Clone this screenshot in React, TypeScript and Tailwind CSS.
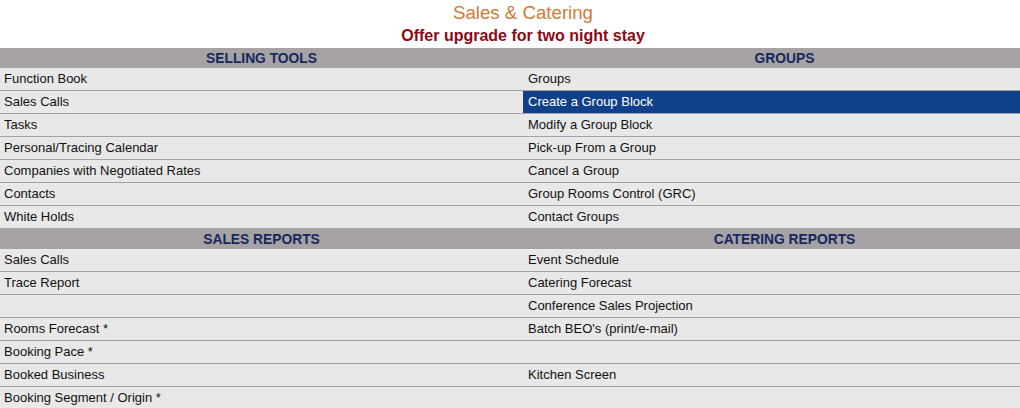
import React from "react";

type Row = {
  left: string;
  right: string;
  active?: boolean;
};

type Section = {
  leftTitle: string;
  rightTitle: string;
  tall?: boolean;
  rows: Row[];
};

const sections: Section[] = [
  {
    leftTitle: "SELLING TOOLS",
    rightTitle: "GROUPS",
    rows: [
      { left: "Function Book", right: "Groups" },
      { left: "Sales Calls", right: "Create a Group Block", active: true },
      { left: "Tasks", right: "Modify a Group Block" },
      { left: "Personal/Tracing Calendar", right: "Pick-up From a Group" },
      { left: "Companies with Negotiated Rates", right: "Cancel a Group" },
      { left: "Contacts", right: "Group Rooms Control (GRC)" },
      { left: "White Holds", right: "Contact Groups" },
    ],
  },
  {
    leftTitle: "SALES REPORTS",
    rightTitle: "CATERING REPORTS",
    tall: true,
    rows: [
      { left: "Sales Calls", right: "Event Schedule" },
      { left: "Trace Report", right: "Catering Forecast" },
      { left: "", right: "Conference Sales Projection" },
      { left: "Rooms Forecast *", right: "Batch BEO's (print/e-mail)" },
      { left: "Booking Pace *", right: "" },
      { left: "Booked Business", right: "Kitchen Screen" },
      { left: "Booking Segment / Origin *", right: "" },
    ],
  },
];

const MenuSection = ({ section }: { section: Section }) => {
  return (
    <div>
      <div
        className={`grid grid-cols-2 ${
          section.tall ? "h-[21px] pt-[2px]" : "h-[20px] pt-[1px]"
        } bg-[#a7a3a5] text-[#14285e] font-bold text-[13.8px] leading-[20px]`}
      >
        <div className="text-center">{section.leftTitle}</div>
        <div className="text-center">{section.rightTitle}</div>
      </div>
      {section.rows.map((row, i) => (
        <div
          key={i}
          className={`grid grid-cols-2 ${
            i > 0 ? "h-[23px] border-t border-[#a3a3a3]" : "h-[22px]"
          } bg-[#e8e8e8] text-[13px] leading-[21px] text-[#111]`}
        >
          <div className="px-1">{row.left}</div>
          <div
            className={`px-[5px] ${
              row.active ? "bg-[#11408a] text-white" : ""
            }`}
          >
            {row.right}
          </div>
        </div>
      ))}
    </div>
  );
};

const App = () => {
  return (
    <div
      className="w-[1020px] h-[408px] overflow-hidden bg-white"
      style={{ fontFamily: '"Liberation Sans", Arial, sans-serif' }}
    >
      <div className="w-[1046px]">
        <div className="text-center text-[#d27a36] text-[18.67px] leading-[26px] h-[26px]">
          Sales &amp; Catering
        </div>
        <div className="text-center text-[#8b0a14] font-bold text-[16px] leading-[20px] h-[22px]">
          Offer upgrade for two night stay
        </div>
        {sections.map((s, i) => (
          <MenuSection key={i} section={s} />
        ))}
      </div>
    </div>
  );
};

export default App;
